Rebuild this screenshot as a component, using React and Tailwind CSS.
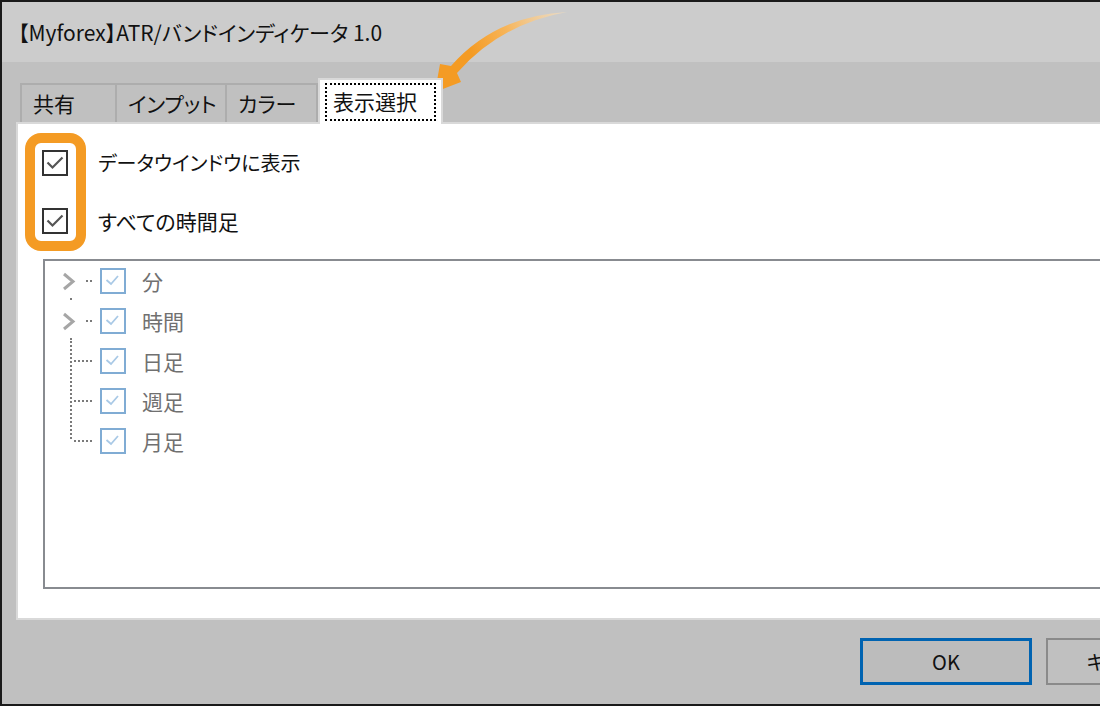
import React from "react";

const font = { fontFamily: '"Noto Sans CJK JP", "Noto Sans", sans-serif' };

function Check({ tone = "dark" }) {
  const dark = tone === "dark";
  return (
    <div
      className={
        dark
          ? "w-[26px] h-[26px] border-2 border-[#333333] bg-white shrink-0"
          : "w-[26px] h-[26px] border-2 border-[#80acd4] bg-white shrink-0"
      }
    >
      <svg width="22" height="22" viewBox="0 0 22 22">
        {dark ? (
          <polyline points="3.5,10.5 8.5,15.5 18.5,5.5" fill="none" stroke="#555555" strokeWidth="2.2" />
        ) : (
          <polyline points="4.5,10 9,14 16,6" fill="none" stroke="#a9c9e6" strokeWidth="1.8" />
        )}
      </svg>
    </div>
  );
}

// connector drawn to the left of each tree checkbox
function Branch({ kind }) {
  const dots = (x1, x2, y) => {
    const out = [];
    for (let x = x1; x <= x2; x += 4) out.push(<rect key={"h" + x} x={x} y={y} width="2" height="2" fill="#7a7a7a" />);
    return out;
  };
  const vdots = (y1, y2) => {
    const out = [];
    for (let y = y1; y <= y2; y += 4) out.push(<rect key={"v" + y} x="25" y={y} width="2" height="2" fill="#7a7a7a" />);
    return out;
  };
  return (
    <svg width="55" height="40" viewBox="0 0 55 40" className="shrink-0">
      {kind === "folder" ? (
        <>
          <polyline points="19,13 28,20.5 19,28" fill="none" stroke="#a6a6a6" strokeWidth="3" />
          {dots(41, 45, 19)}
          {vdots(37, 39)}
        </>
      ) : null}
      {kind === "mid" ? (
        <>
          {vdots(0, 38)}
          {dots(29, 45, 19)}
        </>
      ) : null}
      {kind === "last" ? (
        <>
          {vdots(0, 18)}
          {dots(29, 45, 19)}
        </>
      ) : null}
    </svg>
  );
}

function TreeRow({ kind, label }) {
  return (
    <div className="flex items-center h-[40px]">
      <Branch kind={kind} />
      <Check tone="light" />
      <span className="ml-[16px] text-[21px] text-[#707070] leading-none">{label}</span>
    </div>
  );
}

export default function App() {
  const tree = [
    { kind: "folder", label: "分" },
    { kind: "folder", label: "時間" },
    { kind: "mid", label: "日足" },
    { kind: "mid", label: "週足" },
    { kind: "last", label: "月足" },
  ];

  return (
    <div
      className="relative w-[1100px] h-[706px] overflow-hidden bg-[#1a1a1a] pt-[2px] pl-[2px] pb-[2px] flex flex-col text-[#111111] [font-feature-settings:'palt']"
      style={font}
    >
      {/* title bar */}
      <div className="h-[60px] shrink-0 bg-[#cccccc] flex items-center pl-[16px]">
        <span className="text-[21px] leading-none whitespace-nowrap">【Myforex】ATR/バンドインディケータ 1.0</span>
      </div>

      <div className="flex-1 bg-[#c0c0c0] pt-[16px] flex flex-col">
        {/* tabs */}
        <div className="flex items-end h-[44px] pl-[18px] whitespace-nowrap">
          <div className="h-[39px] w-[95px] border-l-2 border-t-2 border-[#adadad] flex items-center pl-[11px] text-[21px]">共有</div>
          <div className="h-[39px] w-[110px] border-l-2 border-t-2 border-[#adadad] flex items-center pl-[11px] text-[21px]">インプット</div>
          <div className="h-[39px] w-[93px] border-l-2 border-t-2 border-r-2 border-[#adadad] flex items-center pl-[11px] text-[21px]">カラー</div>
          <div className="relative z-10 h-[46px] w-[125px] -mb-[2px] bg-white border-l-2 border-t-2 border-r-2 border-[#d9d9d9] pt-[3px] px-[5px] pb-[3px]">
            <div className="h-[38px] border-2 border-dotted border-black flex items-center pl-[6px] text-[21px]">表示選択</div>
          </div>
        </div>

        {/* panel */}
        <div className="relative ml-[14px] -mr-[40px] h-[498px] shrink-0 bg-white border-2 border-[#d9d9d9] pl-[24px] pt-[26px]">
          <div className="absolute left-[7px] top-[9px] w-[61px] h-[118px] rounded-[16px] border-[10px] border-[#f49b24]" />

          <div className="flex flex-col gap-[32px]">
            <div className="flex items-center gap-[30px]">
              <Check />
              <span className="text-[20px] leading-none">データウインドウに表示</span>
            </div>
            <div className="flex items-center gap-[30px]">
              <Check />
              <span className="text-[21px] leading-none">すべての時間足</span>
            </div>
          </div>

          <div className="mt-[25px] ml-[1px] h-[330px] border-2 border-[#888b90] bg-white">
            {tree.map((r) => (
              <TreeRow key={r.label} kind={r.kind} label={r.label} />
            ))}
          </div>
        </div>

        {/* buttons */}
        <div className="flex gap-[14px] pl-[858px] mt-[18px]">
          <div className="w-[172px] h-[47px] shrink-0 border-[3px] border-[#0063b1] bg-[#bcbcbc] flex items-center justify-center text-[20px]">OK</div>
          <div className="w-[172px] h-[47px] shrink-0 border-2 border-[#8a8a8a] bg-[#c0c0c0] flex items-center justify-center text-[20px]">キャンセル</div>
        </div>
      </div>

      {/* pointer arrow */}
      <svg className="absolute left-0 top-0 pointer-events-none" width="1100" height="706" viewBox="0 0 1100 706">
        <defs>
          <linearGradient id="arrowFade" x1="567" y1="12" x2="470" y2="50" gradientUnits="userSpaceOnUse">
            <stop offset="0" stopColor="#fbe3c0" stopOpacity="0.6" />
            <stop offset="0.6" stopColor="#f7b55a" />
            <stop offset="1" stopColor="#f49b24" />
          </linearGradient>
        </defs>
        <path
          d="M567,12 Q495,16 451,66 L440,64 L435,92 L461,82 L457,73 Q500,24 567,12 Z"
          fill="url(#arrowFade)"
        />
      </svg>
    </div>
  );
}
